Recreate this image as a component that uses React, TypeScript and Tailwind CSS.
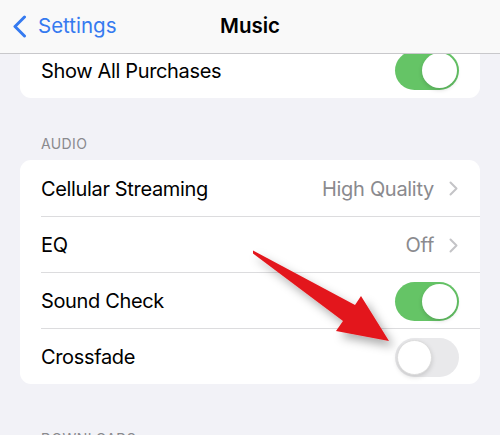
import React from "react";

const font = { fontFamily: "Inter, 'Noto Sans', sans-serif" };

function Toggle({ on }: { on: boolean }) {
  return on ? (
    <div className="w-[64px] h-[39px] rounded-full bg-[#65c466] flex items-center justify-end p-[2px] shrink-0">
      <div className="w-[35px] h-[35px] rounded-full bg-white shadow-[0_2px_4px_rgba(0,0,0,0.15)]" />
    </div>
  ) : (
    <div className="w-[64px] h-[39px] rounded-full bg-[#e9e9eb] flex items-center justify-start p-[2px] shrink-0">
      <div className="w-[35px] h-[35px] rounded-full bg-white border border-[#dcdcdc] shadow-[0_2px_5px_rgba(0,0,0,0.15)]" />
    </div>
  );
}

function Chevron() {
  return (
    <svg width="9" height="15" viewBox="0 0 9 15" className="shrink-0">
      <path d="M1.5 1.5 L7.5 7.5 L1.5 13.5" fill="none" stroke="#c4c4c7" strokeWidth="2" strokeLinecap="round" strokeLinejoin="round" />
    </svg>
  );
}

function Row({
  label,
  value,
  toggle,
  divider,
}: {
  label: string;
  value?: string;
  toggle?: boolean;
  divider?: boolean;
}) {
  return (
    <div className="h-[56px] flex flex-col">
      {divider && <div className="ml-[21px] h-px bg-[#dcdcde]" />}
      <div className="flex-1 flex items-center justify-between pl-[21px] pr-[21px] pt-[1px]">
        <span className="text-[20px] text-black tracking-[-0.35px]">{label}</span>
        {toggle !== undefined ? (
          <Toggle on={toggle} />
        ) : (
          <div className="flex items-center gap-[15px] pr-[1px]">
            <span className="text-[20px] text-[#8a8a8e] tracking-[-0.3px]">{value}</span>
            <Chevron />
          </div>
        )}
      </div>
    </div>
  );
}

export default function App() {
  return (
    <div className="w-[500px] h-[435px] bg-[#f2f2f7] overflow-hidden relative" style={font}>
      <header className="relative z-10 h-[54px] bg-[#f9f9f9] border-b border-[#c8c8cb] grid grid-cols-[1fr_auto_1fr] items-center">
        <div className="flex items-center pl-[12px] gap-[11px] text-[#357af0]">
          <svg width="15" height="23" viewBox="0 0 15 23">
            <path d="M12.5 2 L3 11.5 L12.5 21" fill="none" stroke="#357af0" strokeWidth="3" strokeLinecap="round" strokeLinejoin="round" />
          </svg>
          <span className="text-[20.5px]">Settings</span>
        </div>
        <span className="text-[20.5px] font-semibold text-black">Music</span>
        <div />
      </header>

      <main className="px-[20px]">
        <section className="-mt-[12px] bg-white rounded-[11px]">
          <Row label="Show All Purchases" toggle={true} />
        </section>

        <h2 className="mt-[38px] mb-[8px] pl-[21px] h-[16px] leading-[16px] text-[14px] text-[#8a8a8e] tracking-[0.4px]">
          AUDIO
        </h2>
        <section className="bg-white rounded-[11px] overflow-hidden">
          <Row label="Cellular Streaming" value="High Quality" />
          <Row label="EQ" value="Off" divider />
          <Row label="Sound Check" toggle={true} divider />
          <Row label="Crossfade" toggle={false} divider />
        </section>

        <h2 className="mt-[47px] pl-[21px] h-[16px] leading-[16px] text-[14px] text-[#8a8a8e] tracking-[0.4px]">
          DOWNLOADS
        </h2>
      </main>

      {/* red pointer arrow */}
      <svg className="absolute left-0 top-0 pointer-events-none" width="500" height="435" viewBox="0 0 500 435">
        <defs>
          <filter id="arrowShadow" x="-20%" y="-20%" width="150%" height="150%">
            <feDropShadow dx="5" dy="6" stdDeviation="5" floodColor="#000" floodOpacity="0.32" />
          </filter>
        </defs>
        <polygon
          points="253,250.5 355,305 361,296 389,341 336,331 343,321 253,253.5"
          fill="#e3161b"
          filter="url(#arrowShadow)"
        />
      </svg>
    </div>
  );
}
